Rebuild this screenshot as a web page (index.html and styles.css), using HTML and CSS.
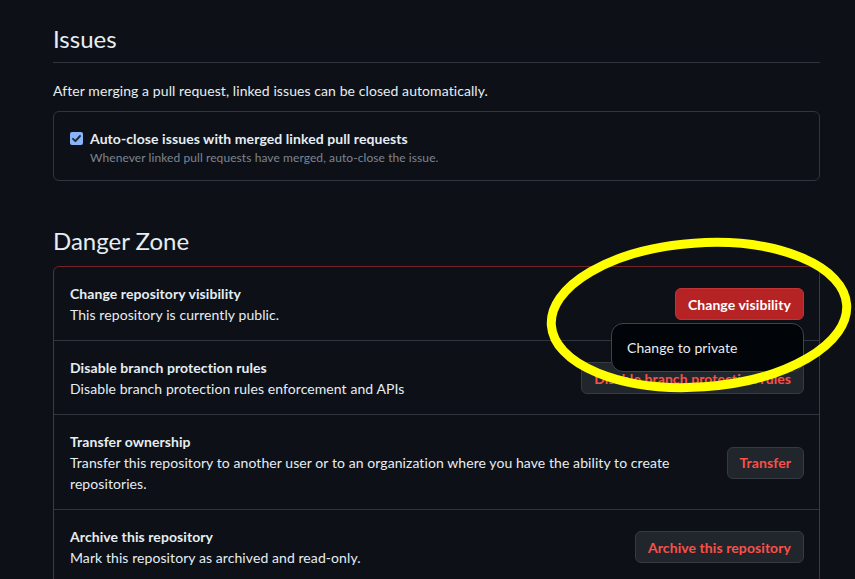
FILE: index.html
```html
<!DOCTYPE html>
<html lang="en">
<head>
<meta charset="utf-8">
<title>Settings</title>
<link rel="stylesheet" href="styles.css">
</head>
<body>
<main class="page">
  <h2 class="subhead">Issues</h2>
  <p class="lead">After merging a pull request, linked issues can be closed automatically.</p>
  <div class="box">
    <label class="check-row">
      <span class="checkbox"><svg viewBox="0 0 13 13" width="13" height="13"><path d="M3 6.8 L5.4 9.2 L10 4" fill="none" stroke="#1f2937" stroke-width="1.9" stroke-linecap="round" stroke-linejoin="round"/></svg></span>
      <span class="check-text">
        <span class="check-label">Auto-close issues with merged linked pull requests</span>
        <span class="note">Whenever linked pull requests have merged, auto-close the issue.</span>
      </span>
    </label>
  </div>

  <h2 class="subhead danger-head">Danger Zone</h2>
  <div class="danger-box">
    <div class="row">
      <div class="row-text">
        <div class="row-title">Change repository visibility</div>
        <div class="row-desc">This repository is currently public.</div>
      </div>
      <div class="menu-anchor">
        <button class="btn btn-red">Change visibility</button>
        <div class="menu">
          <div class="menu-item">Change to private</div>
        </div>
      </div>
    </div>
    <div class="row">
      <div class="row-text">
        <div class="row-title">Disable branch protection rules</div>
        <div class="row-desc">Disable branch protection rules enforcement and APIs</div>
      </div>
      <button class="btn btn-danger">Disable branch protection rules</button>
    </div>
    <div class="row">
      <div class="row-text">
        <div class="row-title">Transfer ownership</div>
        <div class="row-desc">Transfer this repository to another user or to an organization where you have the ability to create repositories.</div>
      </div>
      <button class="btn btn-danger">Transfer</button>
    </div>
    <div class="row">
      <div class="row-text">
        <div class="row-title">Archive this repository</div>
        <div class="row-desc">Mark this repository as archived and read-only.</div>
      </div>
      <button class="btn btn-danger">Archive this repository</button>
    </div>
  </div>
</main>
<svg class="highlight" width="320" height="170" viewBox="0 0 320 170">
  <ellipse cx="160" cy="85" rx="148" ry="72" fill="none" stroke="#ffff00" stroke-width="9" transform="rotate(-4 160 85)"/>
</svg>
</body>
</html>
```

FILE: styles.css
```css
html, body {
  margin: 0;
  padding: 0;
  background: #0d1117;
}
body {
  position: relative;
  color: #e6edf3;
  font-family: Lato, "Open Sans", "Liberation Sans", sans-serif;
  font-size: 14px;
  line-height: 21px;
  letter-spacing: 0.08px;
  height: 579px;
  overflow: hidden;
}
.page {
  width: 767px;
  margin-left: 53px;
  padding-top: 24px;
}
.subhead {
  margin: 0;
  font-size: 24px;
  font-weight: 400;
  line-height: 30px;
  letter-spacing: 0;
  padding-bottom: 8px;
  border-bottom: 1px solid #30363d;
}
.lead {
  margin: 17px 0 0;
}
.box {
  margin-top: 10px;
  border: 1px solid #30363d;
  border-radius: 6px;
  padding: 16px 16px 13px;
}
.check-row {
  display: flex;
  align-items: flex-start;
  gap: 7px;
}
.checkbox {
  width: 13px;
  height: 13px;
  margin-top: 4px;
  border-radius: 2px;
  background: #8ab4f8;
  display: flex;
}
.check-text {
  display: flex;
  flex-direction: column;
}
.check-label {
  font-weight: 700;
}
.note {
  font-size: 12px;
  line-height: 18px;
  color: #7d8590;
}
.danger-head {
  margin-top: 45px;
  border-bottom: none;
  padding-bottom: 0;
}
.danger-box {
  margin-top: 10px;
  border: 1px solid #722426;
  border-radius: 6px;
}
.row {
  display: flex;
  align-items: center;
  gap: 16px;
  padding: 16px 15px 15px 16px;
  border-top: 1px solid #30363d;
}
.row:first-child {
  border-top: none;
}
.row-text {
  flex: 1;
}
.row-title {
  font-weight: 700;
}
.btn {
  font: inherit;
  font-weight: 700;
  letter-spacing: 0.08px;
  height: 32px;
  padding: 0 12px;
  border-radius: 6px;
  border: 1px solid #363b42;
  white-space: nowrap;
  flex: none;
}
.btn-red {
  background: #b62324;
  color: #ffffff;
  border-color: #c13334;
}
.btn-danger {
  background: #21262d;
  color: #f85149;
}
.menu-anchor {
  position: relative;
  flex: none;
}
.menu-anchor .btn {
  display: block;
}
.menu {
  position: absolute;
  top: 35px;
  right: 0;
  width: 191px;
  padding: 6px 0;
  background: #010409;
  border: 1px solid #3d444d;
  border-radius: 12px;
  z-index: 2;
}
.menu-item {
  padding: 7px 15px;
  line-height: 21px;
}
.highlight {
  position: absolute;
  left: 539px;
  top: 230px;
  z-index: 3;
}
```
